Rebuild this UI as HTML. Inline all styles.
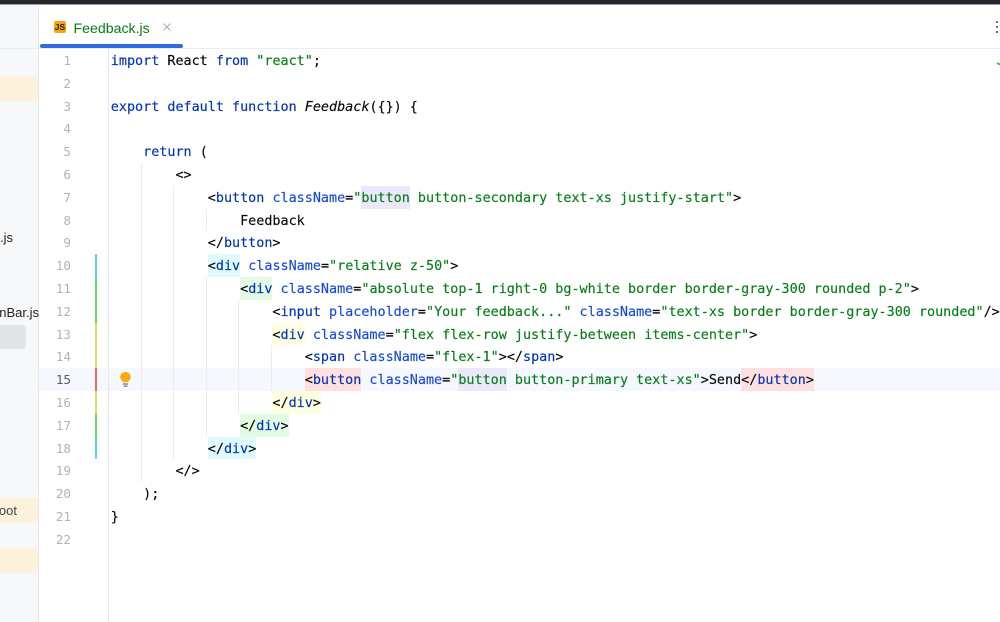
<!DOCTYPE html>
<html><head><meta charset="utf-8">
<style>
html,body{margin:0;padding:0;background:#fff}
#p{position:relative;width:1000px;height:622px;overflow:hidden;background:#fff;font-family:"Liberation Sans",sans-serif}
.a{position:absolute}
.l{position:absolute;left:110.8px;height:22.8px;margin:0;font:13.43px/26.8px "DejaVu Sans Mono","Liberation Mono",monospace;color:#080808;white-space:pre;-webkit-text-stroke:.15px}
.n{position:absolute;width:71px;left:0;text-align:right;height:22.8px;font:12.6px/24.6px "DejaVu Sans Mono","Liberation Mono",monospace;color:#aeb3c2}
.k{color:#0033b3}.s{color:#067d17}.t{color:#0033b3}.at{color:#174ad4}
.i{font-style:italic;color:#080808}
.c{background:#e0fbfd}.g{background:#e4fbe3}.y{background:#fefee0}.r{background:#ffe0e0}.v{background:#ece8fb}
.h{display:inline-block;height:22.8px;vertical-align:top}
.sb{position:absolute;font:13px/20px "Liberation Sans",sans-serif;color:#222;white-space:nowrap;text-align:right;right:961px}
</style></head><body><div id="p">
<div class="a" style="left:0;top:0;width:1000px;height:4px;background:#25272c"></div>
<div class="a" style="left:0;top:4px;width:1000px;height:1px;background:#9a9b9e"></div>

<div class="a" style="left:0;top:5px;width:38px;height:617px;background:#f7f8fa"></div>
<div class="a" style="left:38px;top:5px;width:1px;height:617px;background:#e6e7ec"></div>
<div class="a" style="left:0;top:48px;width:38px;height:1px;background:#ebecf0"></div>
<div class="a" style="left:0;top:76px;width:38px;height:25px;background:#fdf3dc"></div>
<div class="a" style="left:0;top:498px;width:38px;height:25px;background:#fdf3dc"></div>
<div class="a" style="left:0;top:548px;width:38px;height:25px;background:#fdf3dc"></div>
<div class="a" style="left:-10px;top:325px;width:36px;height:24px;background:#e3e4e7;border-radius:4px"></div>
<div class="sb" style="top:228px;right:987px">.js</div>
<div class="sb" style="top:303px;right:961px">nBar.js</div>
<div class="sb" style="top:501px;right:983px;color:#444">oot</div>

<div class="a" style="left:39px;top:48px;width:961px;height:1px;background:#ebecf0"></div>
<div class="a" style="left:40px;top:44px;width:143px;height:4px;background:#2f6be0;border-radius:2px"></div>
<div class="a" style="left:54px;top:21px;width:12px;height:12px;background:#f4a60d;border-radius:2px"></div>
<div class="a" style="left:54px;top:21px;width:12px;height:12px;font:bold 8.5px/13px 'Liberation Sans',sans-serif;color:#1c1c1c;text-align:center">JS</div>
<div class="a" style="left:73.5px;top:17.5px;font:14.15px/20px 'Liberation Sans',sans-serif;color:#067d17;white-space:nowrap">Feedback.js</div>
<svg class="a" style="left:162px;top:22px" width="10" height="10" viewBox="0 0 10 10"><path d="M1.500 1.500L8.500 8.500M8.500 1.500L1.500 8.500" stroke="#a8adbd" stroke-width="1.100" fill="none"/></svg>
<div class="a" style="left:996px;top:21px;width:2px;height:2px;background:#6c707e"></div>
<div class="a" style="left:996px;top:26px;width:2px;height:2px;background:#6c707e"></div>
<div class="a" style="left:996px;top:31px;width:2px;height:2px;background:#6c707e"></div>
<svg class="a" style="left:996px;top:60px" width="4" height="8" viewBox="0 0 4 8"><path d="M1 2.500L3 4.500L4 3.500" stroke="#3fa457" stroke-width="1.400" fill="none"/></svg>

<div class="a" style="left:39px;top:368.200px;width:961px;height:22.800px;background:#f5f8fe"></div>
<div class="a" style="left:108px;top:49px;width:1px;height:573px;background:#e6e7ec"></div>

<div class="a" style="left:95px;top:254px;width:2px;height:23px;background:#5fd4e0"></div>
<div class="a" style="left:95px;top:277px;width:2px;height:45.600px;background:#6cd66c"></div>
<div class="a" style="left:95px;top:322.600px;width:2px;height:45.600px;background:#e3d86a"></div>
<div class="a" style="left:95px;top:368.200px;width:2px;height:22.800px;background:#e46a6a"></div>
<div class="a" style="left:95px;top:391px;width:2px;height:22.800px;background:#e3d86a"></div>
<div class="a" style="left:95px;top:413.800px;width:2px;height:22.800px;background:#6cd66c"></div>
<div class="a" style="left:95px;top:436.600px;width:2px;height:22.800px;background:#5fd4e0"></div>

<div class="a" style="left:141px;top:163px;width:1px;height:319px;background:#ebecf0"></div>
<div class="a" style="left:173px;top:186px;width:1px;height:273.400px;background:#ebecf0"></div>
<div class="a" style="left:206px;top:208.600px;width:1px;height:22.800px;background:#ebecf0"></div>
<div class="a" style="left:206px;top:277px;width:1px;height:159.600px;background:#ebecf0"></div>
<div class="a" style="left:238px;top:300px;width:1px;height:113.800px;background:#ebecf0"></div>
<div class="a" style="left:271px;top:345.400px;width:1px;height:45.600px;background:#ebecf0"></div>

<svg class="a" style="left:119px;top:371px" width="13" height="17" viewBox="0 0 13 17"><path d="M6.500 1A5.300 5.300 0 0 0 1.200 6.300C1.200 8.300 3 9.500 4 11.300H9C10 9.500 11.800 8.300 11.800 6.300A5.300 5.300 0 0 0 6.500 1Z" fill="#fba90f"/><rect x="3.800" y="12.200" width="5.400" height="1.600" fill="#8e93a3"/><rect x="4.600" y="14.400" width="3.800" height="1.600" fill="#8e93a3"/></svg>

<div class="n" style="top:49px">1</div>
<div class="n" style="top:71.800px">2</div>
<div class="n" style="top:94.600px">3</div>
<div class="n" style="top:117.400px">4</div>
<div class="n" style="top:140.200px">5</div>
<div class="n" style="top:163px">6</div>
<div class="n" style="top:185.800px">7</div>
<div class="n" style="top:208.600px">8</div>
<div class="n" style="top:231.400px">9</div>
<div class="n" style="top:254.200px">10</div>
<div class="n" style="top:277px">11</div>
<div class="n" style="top:299.800px">12</div>
<div class="n" style="top:322.600px">13</div>
<div class="n" style="top:345.400px">14</div>
<div class="n" style="top:368.200px;color:#5a5d6b">15</div>
<div class="n" style="top:391px">16</div>
<div class="n" style="top:413.800px">17</div>
<div class="n" style="top:436.600px">18</div>
<div class="n" style="top:459.400px">19</div>
<div class="n" style="top:482.200px">20</div>
<div class="n" style="top:505px">21</div>
<div class="n" style="top:527.800px">22</div>

<pre class="l" style="top:49px"><span class="k">import</span> React <span class="k">from</span> <span class="s">"react"</span>;</pre>
<pre class="l" style="top:94.600px"><span class="k">export default function</span> <span class="i">Feedback</span>({}) {</pre>
<pre class="l" style="top:140.200px">    <span class="k">return</span> (</pre>
<pre class="l" style="top:163px">        &lt;&gt;</pre>
<pre class="l" style="top:185.800px">            &lt;<span class="t">button</span> <span class="at">className</span>=<span class="s">"<span class="v h">button</span> button-secondary text-xs justify-start"</span>&gt;</pre>
<pre class="l" style="top:208.600px">                Feedback</pre>
<pre class="l" style="top:231.400px">            &lt;/<span class="t">button</span>&gt;</pre>
<pre class="l" style="top:254.200px">            <span class="c h">&lt;<span class="t">div</span></span> <span class="at">className</span>=<span class="s">"relative z-50"</span>&gt;</pre>
<pre class="l" style="top:277px">                <span class="g h">&lt;<span class="t">div</span></span> <span class="at">className</span>=<span class="s">"absolute top-1 right-0 bg-white border border-gray-300 rounded p-2"</span>&gt;</pre>
<pre class="l" style="top:299.800px">                    &lt;<span class="t">input</span> <span class="at">placeholder</span>=<span class="s">"Your feedback..."</span> <span class="at">className</span>=<span class="s">"text-xs border border-gray-300 rounded"</span>/&gt;</pre>
<pre class="l" style="top:322.600px">                    <span class="y h">&lt;<span class="t">div</span></span> <span class="at">className</span>=<span class="s">"flex flex-row justify-between items-center"</span>&gt;</pre>
<pre class="l" style="top:345.400px">                        &lt;<span class="t">span</span> <span class="at">className</span>=<span class="s">"flex-1"</span>&gt;&lt;/<span class="t">span</span>&gt;</pre>
<pre class="l" style="top:368.200px">                        <span class="r h">&lt;<span class="t">button</span></span> <span class="at">className</span>=<span class="s">"<span class="v h">button</span> button-primary text-xs"</span>&gt;Send<span class="r h">&lt;/<span class="t">button</span>&gt;</span></pre>
<pre class="l" style="top:391px">                    <span class="y h">&lt;/<span class="t">div</span>&gt;</span></pre>
<pre class="l" style="top:413.800px">                <span class="g h">&lt;/<span class="t">div</span>&gt;</span></pre>
<pre class="l" style="top:436.600px">            <span class="c h">&lt;/<span class="t">div</span>&gt;</span></pre>
<pre class="l" style="top:459.400px">        &lt;/&gt;</pre>
<pre class="l" style="top:482.200px">    );</pre>
<pre class="l" style="top:505px">}</pre>
</div></body></html>
